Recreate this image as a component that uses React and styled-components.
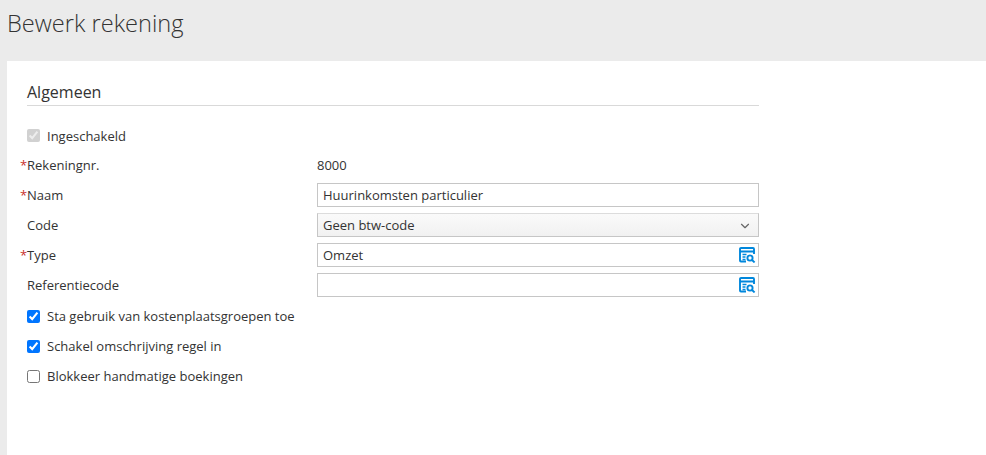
import React from 'react';
import styled, { createGlobalStyle } from 'styled-components';
import { ChevronDown } from 'lucide-react';

const GlobalStyle = createGlobalStyle`
  html, body {
    margin: 0;
    height: 100%;
    overflow: hidden;
  }
  body {
    background: #ebebeb;
    font-family: "Open Sans", sans-serif;
    font-size: 13px;
    color: #333;
  }
`;

const Header = styled.header`
  height: 61px;
  box-sizing: border-box;
  padding: 7px 0 0 7px;
`;

const Title = styled.h1`
  margin: 0;
  font-size: 23.6px;
  line-height: 33px;
  font-weight: 300;
  color: #333;
`;

const Panel = styled.main`
  margin-left: 7px;
  height: 394px;
  box-sizing: border-box;
  background: #fff;
  padding: 19px 0 0 20px;
`;

const Section = styled.section`
  width: 732px;
`;

const SectionTitle = styled.h2`
  margin: 0 0 15px;
  height: 25px;
  font-size: 16px;
  line-height: 24px;
  font-weight: 400;
  color: #333;
  border-bottom: 1px solid #d9d9d9;
`;

const Row = styled.div`
  display: grid;
  grid-template-columns: 290px 442px;
  align-items: center;
  height: 30px;
`;

const Label = styled.label`
  position: relative;
  line-height: 18px;
  ${p => p.$required && `
    &::before {
      content: '*';
      position: absolute;
      left: -7px;
      top: 0;
      color: #c9302c;
    }
  `}
`;

const Value = styled.div`
  line-height: 18px;
`;

const Field = styled.div`
  position: relative;
  height: 24px;
  box-sizing: border-box;
  border: 1px solid #c6c6c6;
  border-top-color: ${p => p.$select ? '#dcdcdc' : '#c6c6c6'};
  background: ${p => p.$select ? 'linear-gradient(#fafafa, #f1f1f1)' : '#fff'};
  padding: 0 5px;
  line-height: 22px;
  color: #333;
`;

const FieldIcon = styled.span`
  position: absolute;
  right: 2px;
  top: 3px;
  display: flex;
`;

const SelectArrow = styled(ChevronDown)`
  position: absolute;
  right: 6px;
  top: 5px;
  color: #666;
`;

const CheckRow = styled.label`
  display: flex;
  align-items: center;
  height: 30px;
  gap: 7px;
  line-height: 18px;
  ${p => p.$compact && 'height: 29px;'}
  ${p => p.$spaced && 'margin-top: 1px;'}
`;

const Check = styled.input.attrs({ type: 'checkbox' })`
  width: 13px;
  height: 13px;
  margin: 0;
  accent-color: #0075ff;
`;

const LookupIcon = () => (
  <svg width="17" height="16" viewBox="0 0 17 16" fill="none">
    <path d="M7 14.5H2a1 1 0 0 1-1-1V2a1 1 0 0 1 1-1h12a1 1 0 0 1 1 1v5" stroke="#0087dc" strokeWidth="1.9" />
    <path d="M1 4.5h14" stroke="#0087dc" strokeWidth="2" />
    <path d="M3.5 7.5h4M3.5 10h3M3.5 12.5h3" stroke="#0087dc" strokeWidth="1.5" />
    <circle cx="11" cy="11" r="2.6" stroke="#0087dc" strokeWidth="1.9" />
    <path d="M13 13l2.6 2.4" stroke="#0087dc" strokeWidth="1.9" />
  </svg>
);

const App = () => {
  return (
    <>
      <GlobalStyle />
      <Header>
        <Title>Bewerk rekening</Title>
      </Header>
      <Panel>
        <Section>
          <SectionTitle>Algemeen</SectionTitle>
          <CheckRow $compact>
            <Check defaultChecked disabled />
            Ingeschakeld
          </CheckRow>
          <Row>
            <Label $required>Rekeningnr.</Label>
            <Value>8000</Value>
          </Row>
          <Row>
            <Label $required>Naam</Label>
            <Field>Huurinkomsten particulier</Field>
          </Row>
          <Row>
            <Label>Code</Label>
            <Field $select>
              Geen btw-code
              <SelectArrow size={14} />
            </Field>
          </Row>
          <Row>
            <Label $required>Type</Label>
            <Field>
              Omzet
              <FieldIcon><LookupIcon /></FieldIcon>
            </Field>
          </Row>
          <Row>
            <Label>Referentiecode</Label>
            <Field>
              <FieldIcon><LookupIcon /></FieldIcon>
            </Field>
          </Row>
          <CheckRow $spaced>
            <Check defaultChecked />
            Sta gebruik van kostenplaatsgroepen toe
          </CheckRow>
          <CheckRow>
            <Check defaultChecked />
            Schakel omschrijving regel in
          </CheckRow>
          <CheckRow>
            <Check />
            Blokkeer handmatige boekingen
          </CheckRow>
        </Section>
      </Panel>
    </>
  );
};

export default App;
